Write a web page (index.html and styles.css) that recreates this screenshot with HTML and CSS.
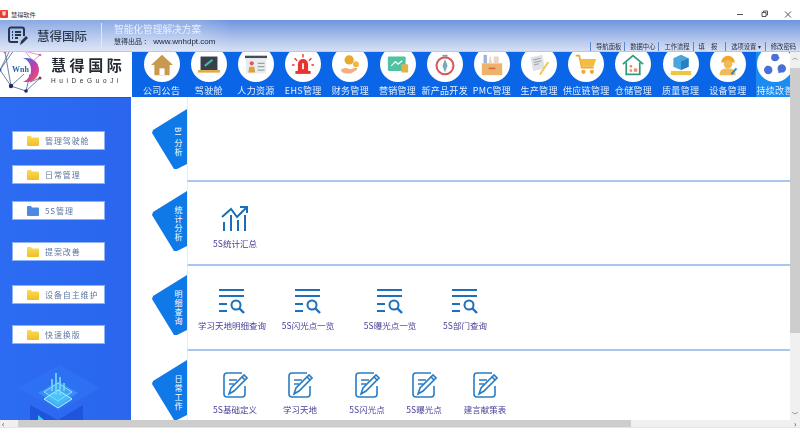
FILE: index.html
```html
<!DOCTYPE html>
<html lang="zh-CN">
  <head>
    <meta charset="UTF-8" />
    <title>慧得软件</title>
    <link rel="stylesheet" href="styles.css">
  </head>
  <body>
    <div class="window">
      <div class="titlebar">
        <svg class="app-icon" width="8" height="8" viewBox="0 0 8 8"><rect width="8" height="8" rx="1" fill="#e8402c"/><path d="M2 2h4M2 4h4M4 2v4" stroke="#fff" stroke-width="1"/></svg>
        <span class="app-name">慧得软件</span>
        <div class="win-btns">
          <svg width="60" height="10" viewBox="0 0 60 10">
            <path d="M1 5.500h6" stroke="#555" stroke-width="1"/>
            <path d="M26 3.500h4v4h-4zM27.500 3.500V2h4v4H30" stroke="#555" stroke-width="1" fill="none"/>
            <path d="M49 2.500l6 6M55 2.500l-6 6" stroke="#555" stroke-width="1"/>
          </svg>
        </div>
      </div>

      <div class="banner">
        <div class="banner-left">
          <svg class="banner-icon" width="20" height="20" viewBox="0 0 20 20" fill="none" stroke="#26364f" stroke-width="2">
            <path d="M16 10V3.500a2 2 0 0 0-2-2H3a2 2 0 0 0-2 2V14a2 2 0 0 0 2 2h7"/>
            <path d="M4 6h1M7 6h6M4 9h1M7 9h6M4 12h1M7 12h3"/>
            <path d="M12 19l1-4 5-5 2 2-5 5z" fill="#26364f" stroke="none"/>
          </svg>
          <span class="banner-name">慧得国际</span>
          <span class="banner-sep"></span>
          <div class="banner-text">
            <p class="slogan">智能化管理解决方案</p>
            <p class="site">慧得出品 ： <b>www.wnhdpt.com</b></p>
          </div>
        </div>
        <div class="top-menu">
          <span>导航面板</span><span>数据中心</span><span>工作流程</span><span class="menu-fill">填报</span><span class="menu-opt">选项设置 ▾</span><span>修改密码</span>
        </div>
      </div>

      <div class="body-wrap">
        <div class="content">
          <div class="nav-row">
            <div class="logo">
              <svg class="logo-mark" width="49" height="45" viewBox="0 0 49 45">
                <defs>
                  <linearGradient id="blob" x1="0" y1="0" x2="1" y2="1">
                    <stop offset="0" stop-color="#3a7ae8"/>
                    <stop offset=".55" stop-color="#c83aa8"/>
                    <stop offset="1" stop-color="#ef6a4a"/>
                  </linearGradient>
                </defs>
                <g stroke="#46608f" stroke-width=".8" fill="none">
                  <path d="M0 18L11 34 26 39 40 26M0 18L10 -2M5 0L11 34M0 18L14 -2M11 34L24 22M26 39L30 22M40 26L30 30"/>
                  <path d="M20 -2L40 3 33 9M24 -2L33 9" stroke="#d080b8"/>
                </g>
                <circle cx="11" cy="34" r="2.200" fill="#1d2a5c"/><circle cx="26" cy="39" r="1.800" fill="#1d2a5c"/><circle cx="40" cy="26" r="1.500" fill="#8a2f62"/><circle cx="40" cy="3" r="1.300" fill="#c86aa8"/><circle cx="0" cy="18" r="1.500" fill="#2a5c9c"/><circle cx="5" cy="0" r="1.500" fill="#c86aa8"/>
                <path d="M23 6h4a12 12 0 0 1 0 24h-4a12 12 0 0 0 8-12 12 12 0 0 0-8-12z" fill="url(#blob)"/>
                <text x="12" y="20" class="logo-wnh">Wnh</text>
              </svg>
              <div class="logo-text">
                <div class="logo-cn">慧得国际</div>
                <div class="logo-en">HuiDeGuoJi</div>
              </div>
            </div>
            <div class="nav">
              <div class="nav-item">
                <div class="nav-circle"><svg viewBox="0 0 26 26"><path d="M13 1L0 13h4v12h18V13h4z" fill="#c89a4e"/><rect x="10" y="17" width="6" height="8" fill="#fff"/></svg></div>
                <span>公司公告</span>
              </div>
              <div class="nav-item">
                <div class="nav-circle"><svg viewBox="0 0 26 26"><rect x="3" y="3" width="20" height="16" fill="#3a3f4d"/><path d="M8 14l9-7" stroke="#49b6a6" stroke-width="2.500"/><rect x="0" y="19" width="26" height="3" fill="#e0a93a"/></svg></div>
                <span>驾驶舱</span>
              </div>
              <div class="nav-item">
                <div class="nav-circle"><svg viewBox="0 0 26 26"><rect x="0" y="2" width="26" height="3" fill="#444d5c"/><rect x="1" y="5" width="24" height="18" fill="#e8ecef"/><circle cx="8" cy="11" r="2.500" fill="#e05a5a"/><path d="M4 22l1-7h6l1 7z" fill="#d9a23e"/><path d="M15 11h8M15 15h8M15 19h8" stroke="#9aa3ad" stroke-width="1.500"/></svg></div>
                <span>人力资源</span>
              </div>
              <div class="nav-item">
                <div class="nav-circle"><svg viewBox="0 0 26 26" fill="#e6352f"><path d="M7 20v-8a6 6 0 0 1 12 0v8z"/><rect x="4" y="20" width="18" height="3.500"/><path d="M13 0v4M3 5l3 3M23 5l-3 3M0 13h3M23 13h3" stroke="#e6352f" stroke-width="1.600"/><path d="M13 11v7" stroke="#fff" stroke-width="2"/></svg></div>
                <span>EHS管理</span>
              </div>
              <div class="nav-item">
                <div class="nav-circle"><svg viewBox="0 0 26 26"><circle cx="12" cy="7" r="5.500" fill="#e8a92e"/><circle cx="20" cy="12" r="3.500" fill="#efb93f"/><path d="M2 19c5-4 8-2 11-1l7-2c2 0 2 2 1 3l-7 4H8l-4-1z" fill="#f3b183"/></svg></div>
                <span>财务管理</span>
              </div>
              <div class="nav-item">
                <div class="nav-circle"><svg viewBox="0 0 26 26"><rect x="1" y="3" width="21" height="17" rx="1.500" fill="#4fc3a1"/><path d="M5 14l5-5 3 3 5-4" stroke="#fff" stroke-width="1.500" fill="none"/><rect x="17" y="12" width="8" height="10" rx="1" fill="#e0b24a"/></svg></div>
                <span>营销管理</span>
              </div>
              <div class="nav-item">
                <div class="nav-circle"><svg viewBox="0 0 26 26"><circle cx="13" cy="14" r="10" fill="#fff" stroke="#d85a5f" stroke-width="2.500"/><path d="M13 6l3 8-3 8-3-8z" fill="#7fa6b8"/><rect x="10" y="1" width="6" height="2" fill="#8a9aa5"/></svg></div>
                <span>新产品开发</span>
              </div>
              <div class="nav-item">
                <div class="nav-circle"><svg viewBox="0 0 26 26"><rect x="1" y="11" width="24" height="14" fill="#eeb36a"/><rect x="3" y="1" width="4" height="10" fill="#9bb6d6"/><path d="M9 11L11 1l2 10zM15 11V3h6v8z" fill="#e9d6c1"/><rect x="9" y="16" width="8" height="2" fill="#e0654c"/></svg></div>
                <span>PMC管理</span>
              </div>
              <div class="nav-item">
                <div class="nav-circle"><svg viewBox="0 0 26 26"><path d="M3 4l14-3 3 16-14 3z" fill="#dfe2e4"/><path d="M6 7l9-2M7 10l9-2M7 13l6-1.500" stroke="#8d949b" stroke-width="1"/><path d="M13 24l10-15 2 1-10 15z" fill="#eecb4e"/></svg></div>
                <span>生产管理</span>
              </div>
              <div class="nav-item">
                <div class="nav-circle"><svg viewBox="0 0 26 26"><path d="M1 2h4l3 14h14" fill="none" stroke="#f0a72c" stroke-width="2"/><path d="M6 6h19l-3 9H8z" fill="#f5bd3f"/><circle cx="10" cy="21" r="2.500" fill="#f0a72c"/><circle cx="20" cy="21" r="2.500" fill="#f0a72c"/></svg></div>
                <span>供应链管理</span>
              </div>
              <div class="nav-item">
                <div class="nav-circle"><svg viewBox="0 0 26 26" fill="none" stroke="#2e9a7d" stroke-width="2"><path d="M1 12L13 2l12 10M5 10v14h16V10"/><rect x="9" y="13" width="3" height="3" fill="#ef8f6a" stroke="none"/><rect x="14" y="17" width="4" height="4" fill="#ef8f6a" stroke="none"/><rect x="9" y="18" width="3" height="3" fill="#ef8f6a" stroke="none"/></svg></div>
                <span>仓储管理</span>
              </div>
              <div class="nav-item">
                <div class="nav-circle"><svg viewBox="0 0 26 26"><path d="M13 1l9 4v10l-9 4-9-4V5z" fill="#49a6e0"/><path d="M13 9l9-4v10l-9 4z" fill="#2a7fc0"/><rect x="1" y="20" width="24" height="5" fill="#eec544"/></svg></div>
                <span>质量管理</span>
              </div>
              <div class="nav-item">
                <div class="nav-circle"><svg viewBox="0 0 26 26"><path d="M5 10a8 8 0 0 1 16 0z" fill="#f0a72c"/><circle cx="13" cy="12" r="5" fill="#f3bb58"/><path d="M3 25c0-7 4-8 10-8s9 2 9 8z" fill="#f3bb58"/><path d="M17 24l6-7" stroke="#2d8fd0" stroke-width="2.500"/></svg></div>
                <span>设备管理</span>
              </div>
              <div class="nav-item active">
                <div class="nav-circle"><svg viewBox="0 0 26 26" fill="none" stroke="#4a6fd8" stroke-width="2"><path d="M9 5c4-2 6-2 9 0M4 14c-1 4 0 6 3 8M22 14c1 4-1 6-5 8"/><circle cx="13" cy="4" r="3.500" fill="#4a6fd8"/><circle cx="5" cy="19" r="4" fill="#4a6fd8"/><circle cx="21" cy="17" r="4" fill="#4a6fd8"/></svg></div>
                <span>持续改善</span>
              </div>
            </div>
          </div>

          <div class="main">
            <div class="sidebar">
              <div class="side-btn"><svg class="folder" viewBox="0 0 12 11"><use href="#folder"/></svg><span>管理驾驶舱</span></div>
              <div class="side-btn"><svg class="folder" viewBox="0 0 12 11"><use href="#folder"/></svg><span>日常管理</span></div>
              <div class="side-btn"><svg class="folder open" viewBox="0 0 12 11"><use href="#folder"/></svg><span>5S管理</span></div>
              <div class="side-btn"><svg class="folder" viewBox="0 0 12 11"><use href="#folder"/></svg><span>提案改善</span></div>
              <div class="side-btn"><svg class="folder" viewBox="0 0 12 11"><use href="#folder"/></svg><span>设备自主维护</span></div>
              <div class="side-btn"><svg class="folder" viewBox="0 0 12 11"><use href="#folder"/></svg><span>快速换版</span></div>
              <svg class="side-art" width="84" height="55" viewBox="0 0 84 55">
                <path d="M41 0L82 23 41 46 0 23z" fill="#3074f4" opacity=".7"/>
                <path d="M12 40L40 55 65 40V55H12z" fill="#1f55dc"/>
                <path d="M20 50l6 5h-6z" fill="#3fd0f0"/>
                <path d="M40 16L60 28 40 40 20 28z" fill="#3b8cf6"/>
                <path d="M40 18L54 27 40 36 26 27z" fill="#52c8f8" fill-opacity=".35" stroke="#8fe8ff" stroke-width="1"/>
                <path d="M40 25L54 34 40 43 26 34z" fill="#52e0f8" fill-opacity=".55" stroke="#b8f4ff" stroke-width="1"/>
                <path d="M34 26V14M38 30V8M42 30V12M46 26V18" stroke="#6fd8f8" stroke-width="2" opacity=".85"/>
              </svg>
            </div>

            <div class="sections">
              <section class="section sec-bi">
                <div class="tab"><span>BI 分析</span></div>
                <div class="panel"></div>
              </section>
              <section class="section sec-stat">
                <div class="tab"><span>统计分析</span></div>
                <div class="panel row-stat">
                  <div class="tool">
                    <svg width="28" height="28" viewBox="0 0 28 28" fill="none" stroke="#1b6db5" stroke-width="2"><path d="M1 12l9-8 6 8L26 2"/><path d="M19 2h7v6"/><path d="M3 17v9M10 10v16M17 15v11M24 10v16"/></svg>
                    <span>5S统计汇总</span>
                  </div>
                </div>
              </section>
              <section class="section">
                <div class="tab"><span>明细查询</span></div>
                <div class="panel row-query">
                  <div class="tool">
                    <svg class="icon-query" viewBox="0 0 26 26"><use href="#query"/></svg>
                    <span>学习天地明细查询</span>
                  </div>
                  <div class="tool">
                    <svg class="icon-query" viewBox="0 0 26 26"><use href="#query"/></svg>
                    <span>5S闪光点一览</span>
                  </div>
                  <div class="tool">
                    <svg class="icon-query" viewBox="0 0 26 26"><use href="#query"/></svg>
                    <span>5S曝光点一览</span>
                  </div>
                  <div class="tool">
                    <svg class="icon-query" viewBox="0 0 26 26"><use href="#query"/></svg>
                    <span>5S部门查询</span>
                  </div>
                </div>
              </section>
              <section class="section">
                <div class="tab"><span>日常工作</span></div>
                <div class="panel row-work">
                  <div class="tool">
                    <svg class="icon-edit" viewBox="0 0 26 26"><use href="#edit"/></svg>
                    <span>5S基础定义</span>
                  </div>
                  <div class="tool">
                    <svg class="icon-edit" viewBox="0 0 26 26"><use href="#edit"/></svg>
                    <span>学习天地</span>
                  </div>
                  <div class="tool">
                    <svg class="icon-edit" viewBox="0 0 26 26"><use href="#edit"/></svg>
                    <span>5S闪光点</span>
                  </div>
                  <div class="tool">
                    <svg class="icon-edit" viewBox="0 0 26 26"><use href="#edit"/></svg>
                    <span>5S曝光点</span>
                  </div>
                  <div class="tool">
                    <svg class="icon-edit" viewBox="0 0 26 26"><use href="#edit"/></svg>
                    <span>建言献策表</span>
                  </div>
                </div>
              </section>
            </div>
          </div>
        </div>
        <div class="vscroll">
          <span class="arrow">︿</span>
          <div class="vthumb"></div>
          <span class="arrow">﹀</span>
        </div>
      </div>

      <div class="hscroll">
        <span class="harrow">‹</span>
        <div class="hthumb"></div>
        <span class="harrow">›</span>
      </div>
    </div>

    <svg width="0" height="0" class="defs">
      <defs>
        <linearGradient id="folderFill" x1="0" y1="0" x2="0" y2="1">
          <stop offset="0" stop-color="#f8dc5a"/>
          <stop offset="1" stop-color="#f2bd24"/>
        </linearGradient>
        <path id="folder" d="M0 2a1 1 0 0 1 1-1h3l1 1.500h6a1 1 0 0 1 1 1V10a1 1 0 0 1-1 1H1a1 1 0 0 1-1-1z"/>
        <g id="query" fill="none" stroke="#1f70b8" stroke-width="2">
          <path d="M0 2h25M0 8h25M0 16h8M0 23h8"/>
          <circle cx="17" cy="17" r="4.500"/>
          <path d="M20.500 20.500l4.500 4.500" stroke-width="2.400"/>
        </g>
        <g id="edit" fill="none" stroke="#2a7cc4" stroke-width="1.600">
          <path d="M23 14v8a3 3 0 0 1-3 3H5a3 3 0 0 1-3-3V4a3 3 0 0 1 3-3h15"/>
          <path d="M7 8h8M7 12h5"/>
          <path d="M7 22l2-6L20 5l3 3-11 11z"/>
          <path d="M20 5l2-2 3 3-2 2"/>
        </g>
      </defs>
    </svg>
  </body>
</html>
```

FILE: styles.css
```css
* {
  box-sizing: border-box;
  margin: 0;
  padding: 0;
  font-family: "Noto Sans CJK SC", "Liberation Sans", sans-serif;
}

html,
body {
  width: 800px;
  height: 435px;
  overflow: hidden;
  background: #fff;
}

.window {
  display: flex;
  flex-direction: column;
  width: 800px;
  height: 435px;
  filter: blur(0.5px);
}

/* TITLE BAR */
.titlebar {
  display: flex;
  align-items: center;
  height: 20px;
  padding-top: 8px;
  background: #fff;
}

.app-icon {
  margin-right: 3px;
}

.app-name {
  font-size: 6.2px;
  color: #333;
}

.win-btns {
  margin-left: auto;
  margin-right: 4px;
  height: 10px;
  line-height: 0;
}

/* BANNER */
.banner {
  display: flex;
  justify-content: space-between;
  height: 32px;
  background: linear-gradient(180deg, #6d94de 0%, #a9bfea 55%, #d6dff4 100%);
  border-bottom: 1px solid #c4c8d0;
}

.banner-left {
  display: flex;
  align-items: center;
  width: 232px;
  padding-left: 8px;
  background: linear-gradient(90deg, rgba(255, 255, 255, 0.2) 85%, rgba(255, 255, 255, 0));
}

.banner-name {
  margin-left: 9px;
  width: 64px;
  font-size: 12.5px;
  font-weight: 500;
  color: #2c3a50;
}

.banner-sep {
  width: 1px;
  height: 26px;
  background: #dfe7f8;
}

.banner-text {
  margin-left: 12px;
}

.slogan {
  font-size: 9.7px;
  line-height: 12px;
  color: #e8eeff;
}

.site {
  font-size: 7px;
  line-height: 13px;
  color: #1c2433;
}

.site b {
  font-family: "Liberation Sans", sans-serif;
  font-size: 8px;
  font-weight: 400;
  margin-left: 1px;
}

.top-menu {
  display: flex;
  align-items: flex-end;
  padding-right: 4px;
  font-size: 6.3px;
  line-height: 9px;
  color: #2a3140;
}

.top-menu span {
  padding-left: 5px;
  margin-left: 3px;
  border-left: 1px solid #5d86d0;
  white-space: nowrap;
}

.top-menu .menu-fill {
  letter-spacing: 6px;
  margin-right: -1px;
}

.top-menu .menu-opt {
  margin-right: 1px;
}

/* NAV */
.body-wrap {
  display: flex;
  height: 368px;
}

.content {
  flex: 1;
  display: flex;
  flex-direction: column;
  overflow: hidden;
}

.nav-row {
  display: flex;
  height: 45px;
}

.logo {
  display: flex;
  width: 132px;
  background: #fff;
  overflow: hidden;
}

.logo-mark {
  flex: none;
}

.logo-wnh {
  font-family: "Liberation Serif", serif;
  font-size: 8px;
  font-weight: 700;
  fill: #2f5fa8;
}

.logo-text {
  margin-left: 2px;
  padding-top: 3px;
}

.logo-cn {
  font-size: 15px;
  line-height: 20px;
  font-weight: 700;
  letter-spacing: 3.6px;
  color: #262a33;
}

.logo-en {
  font-family: "Liberation Sans", sans-serif;
  font-size: 6.5px;
  line-height: 10px;
  margin-top: 1px;
  letter-spacing: 3.6px;
  color: #333;
}

.nav {
  flex: 1;
  display: flex;
  padding-left: 6px;
  background: #0a66e6;
  overflow: hidden;
}

.nav-item {
  flex: 0 0 47.2px;
  display: flex;
  flex-direction: column;
  align-items: center;
}

.nav-item.active {
  flex-basis: 37px;
  margin-left: 5px;
  background: #1b8cf2;
}

.nav-item span {
  margin-top: 3px;
  font-size: 9px;
  line-height: 12px;
  letter-spacing: 0.3px;
  color: #e4efff;
  white-space: nowrap;
}

.nav-circle {
  flex: none;
  display: flex;
  align-items: center;
  justify-content: center;
  width: 36px;
  height: 36px;
  margin-top: -6px;
  padding-top: 2px;
  border-radius: 50%;
  background: #fff;
}

.nav-circle svg {
  width: 22px;
  height: 22px;
}

/* SIDEBAR */
.main {
  flex: 1;
  display: flex;
  min-height: 0;
}

.sidebar {
  position: relative;
  flex: none;
  width: 131px;
  padding: 33px 0 0 12px;
  background: linear-gradient(90deg, #2c6cf2, #2a66ee);
  border-top: 1px solid #1a55d8;
  overflow: hidden;
}

.side-btn {
  display: flex;
  align-items: center;
  width: 93px;
  height: 19px;
  padding-left: 14px;
  margin-bottom: 15px;
  background: #fff;
  border: 1px solid #8fb4f5;
  font-size: 8px;
  letter-spacing: 0.9px;
  color: #5f78a4;
  white-space: nowrap;
}

.side-btn:nth-child(2) {
  margin-bottom: 17px;
}

.side-btn:nth-child(3) {
  margin-bottom: 22px;
}

.side-btn:nth-child(4) {
  margin-bottom: 24px;
}

.side-btn:nth-child(5) {
  margin-bottom: 21px;
}

.folder {
  width: 12px;
  height: 11px;
  margin-right: 6px;
  fill: url(#folderFill);
}

.folder.open {
  fill: #4e8ae0;
}

.side-art {
  position: absolute;
  left: 18px;
  bottom: 0;
}

/* SECTIONS */
.sections {
  flex: 1;
  min-width: 0;
  padding-left: 21px;
  background: #fff;
  overflow: hidden;
}

.section {
  position: relative;
  display: flex;
  height: 85px;
  padding-top: 9px;
}

.sec-bi {
  padding-top: 12px;
}

.sec-stat {
  height: 84px;
}

.tab {
  flex: none;
  display: flex;
  align-items: center;
  justify-content: flex-end;
  width: 35px;
  height: 61px;
  padding: 5px 4px 0 0;
  background: #0f79e8;
  clip-path: polygon(1px 21px, 35px 0, 35px 55px, 25px 60px, 22px 60px, 0 24px);
}

.tab span {
  writing-mode: vertical-rl;
  font-size: 8px;
  line-height: 10px;
  letter-spacing: 1px;
  color: #fff;
}

.panel {
  position: absolute;
  left: 35px;
  top: 0;
  right: 0;
  bottom: 0;
  display: flex;
  border-bottom: 2px solid #a9c7ee;
  border-left: 1px solid #ececec;
}

.tool {
  display: flex;
  flex-direction: column;
  align-items: center;
  flex: none;
  width: 70px;
  font-size: 8.5px;
  line-height: 12px;
  color: #443f96;
  white-space: nowrap;
}

.row-stat {
  padding: 23px 0 0 12px;
}

.row-stat .tool span {
  margin-top: 4px;
}

.row-query {
  padding: 22px 0 0 9px;
}

.row-query .tool span {
  margin-top: 5px;
}

.row-query .tool:nth-child(1) {
  margin-right: 6px;
}

.row-query .tool:nth-child(2) {
  margin-right: 12px;
}

.row-query .tool:nth-child(3) {
  margin-right: 5px;
}

.row-work {
  padding: 21px 0 0 22px;
  border-bottom: 0;
}

.row-work .tool {
  width: 50px;
}

.row-work .tool span {
  margin-top: 5px;
}

.row-work .tool:nth-child(1) {
  margin-right: 15px;
}

.row-work .tool:nth-child(2) {
  margin-right: 17px;
}

.row-work .tool:nth-child(3) {
  margin-right: 7px;
}

.row-work .tool:nth-child(4) {
  margin-right: 11px;
}

.icon-query,
.icon-edit {
  flex: none;
  width: 26px;
  height: 26px;
}

/* SCROLLBARS */
.vscroll {
  flex: none;
  display: flex;
  flex-direction: column;
  align-items: center;
  justify-content: space-between;
  width: 10px;
  background: #f0f0f0;
}

.vthumb {
  width: 10px;
  flex: 1;
  margin: 6px 0 77px;
  background: #cdcdcd;
}

.arrow {
  height: 10px;
  font-size: 6px;
  line-height: 10px;
  color: #555;
}

.hscroll {
  flex: none;
  display: flex;
  align-items: center;
  height: 8px;
  background: #f0f0f0;
  border-bottom: 1px solid #e4e4e4;
}

.hthumb {
  width: 613px;
  height: 7px;
  margin-left: 10px;
  margin-right: auto;
  background: #cdcdcd;
}

.harrow {
  width: 8px;
  padding-left: 2px;
  font-size: 8px;
  line-height: 7px;
  color: #333;
}

.defs {
  position: absolute;
}
```
